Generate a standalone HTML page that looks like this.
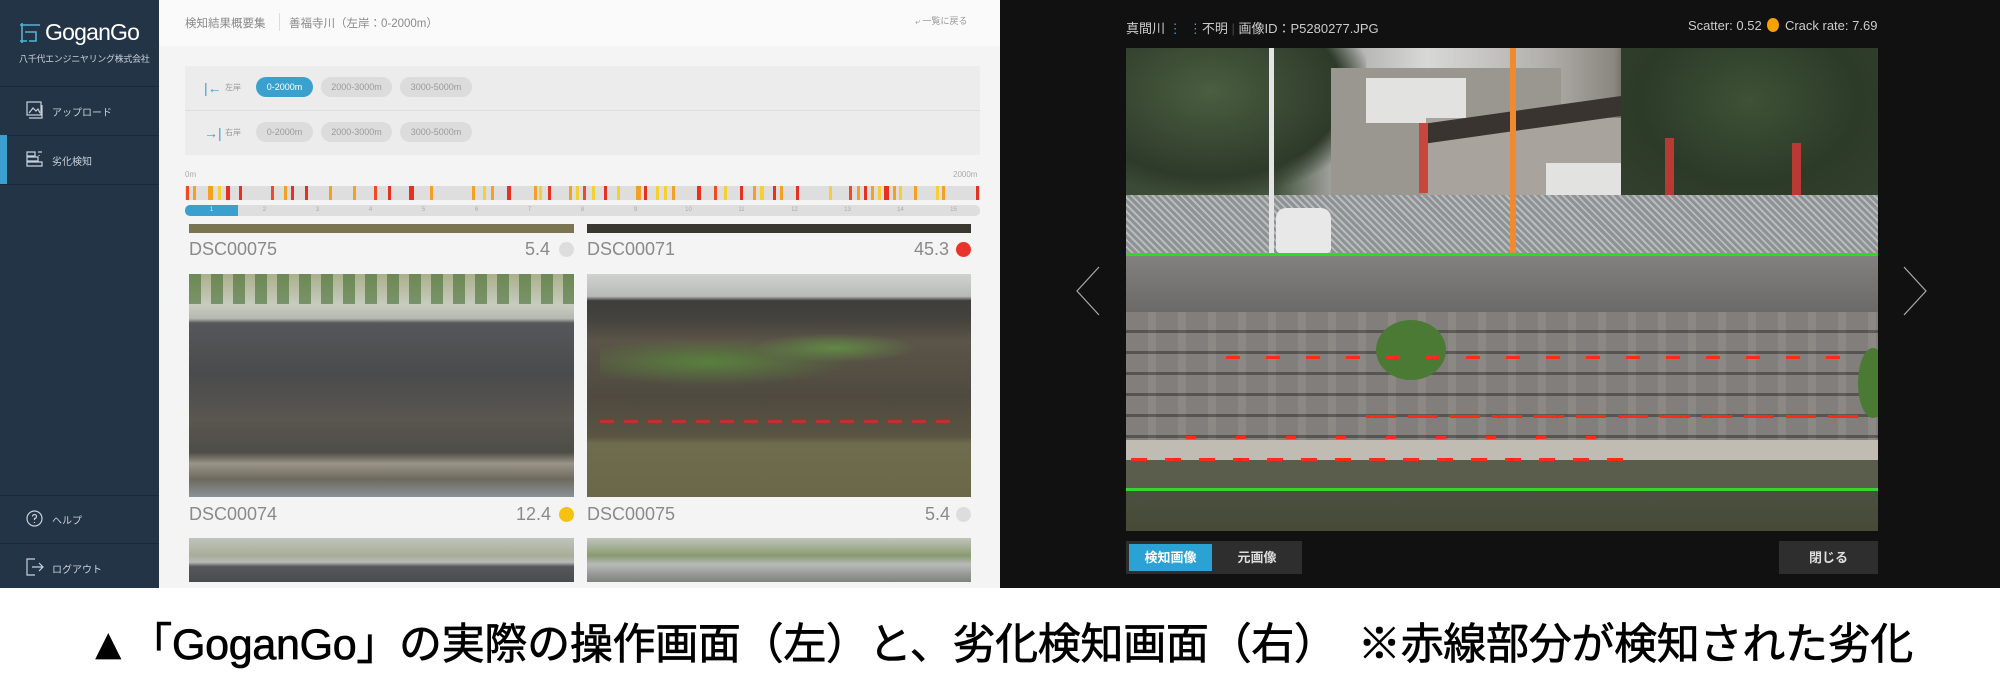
<!DOCTYPE html>
<html><head><meta charset="utf-8">
<style>
*{margin:0;padding:0;box-sizing:border-box}
body{width:2000px;height:700px;overflow:hidden;background:#fff;font-family:"Liberation Sans","Noto Sans CJK JP",sans-serif;position:relative}
.a{position:absolute}
.side{left:0;top:0;width:159px;height:588px;background:#243447}
.sdiv{left:0;width:159px;height:1px;background:#1b2838}
.mi{color:#c9d1db;font-size:10px;left:52px}
.main{left:159px;top:0;width:841px;height:588px;background:#f4f4f4}
.pill{height:20px;border-radius:10px;background:#dcdcdc;color:#9a9a9a;font-size:9px;line-height:20px;text-align:center}
.cap{font-size:18px;color:#8a8a8a}
.dot{width:15px;height:15px;border-radius:50%}
.tk{top:186px;height:14px;width:3px}
.right{left:1000px;top:0;width:1000px;height:588px;background:#111}
.rd{height:3px;background:#ff2a1a}
</style></head><body>

<div class="a side"></div>
<svg class="a" style="left:19px;top:22px" width="22" height="22" viewBox="0 0 22 22" fill="none" stroke="#4fb3d6" stroke-width="1.6"><path d="M1 3H21M3 1V21M1 19H8M6 10H17V19H10"/></svg>
<div class="a" style="left:45px;top:19px;color:#fff;font-size:23px;letter-spacing:-0.8px">GoganGo</div>
<div class="a" style="left:19px;top:52px;color:#c9d1db;font-size:9px;letter-spacing:-0.3px">八千代エンジニヤリング株式会社</div>
<div class="a sdiv" style="top:86px"></div>
<div class="a sdiv" style="top:135px"></div>
<div class="a sdiv" style="top:184px"></div>
<div class="a" style="left:0;top:135px;width:7px;height:49px;background:#3aa1cf"></div>
<svg class="a" style="left:26px;top:101px" width="17" height="18" viewBox="0 0 17 18" fill="none" stroke="#c9d1db" stroke-width="1.2"><rect x="1" y="1" width="14" height="13"/><path d="M3 12L7 7L10 10L12 8L14 12"/><path d="M3 17H16V4"/></svg>
<div class="a mi" style="top:104px">アップロード</div>
<svg class="a" style="left:26px;top:150px" width="17" height="17" viewBox="0 0 17 17" fill="none" stroke="#c9d1db" stroke-width="1.2"><path d="M1 2H9V6H1ZM1 7H12V11H1ZM1 12H16V16H1ZM5 6V7M9 11V12M12 2H16M13 5V6"/></svg>
<div class="a mi" style="top:153px">劣化検知</div>
<div class="a sdiv" style="top:495px"></div>
<div class="a sdiv" style="top:543px"></div>
<svg class="a" style="left:26px;top:510px" width="17" height="17" viewBox="0 0 17 17" fill="none" stroke="#c9d1db" stroke-width="1.2"><circle cx="8.5" cy="8.5" r="7.5"/><path d="M6.5 6.5a2 2 0 1 1 2 2v1.5M8.5 12v1"/></svg>
<div class="a mi" style="top:512px">ヘルプ</div>
<svg class="a" style="left:26px;top:558px" width="18" height="18" viewBox="0 0 18 18" fill="none" stroke="#c9d1db" stroke-width="1.2"><path d="M9 1H1V17H9M6 9H17M13 5L17 9L13 13"/></svg>
<div class="a mi" style="top:561px">ログアウト</div>

<div class="a main"></div>
<div class="a" style="left:159px;top:0;width:841px;height:46px;background:#fafafa"></div>
<div class="a" style="left:185px;top:15px;font-size:11.5px;color:#8a8a8a">検知結果概要集</div>
<div class="a" style="left:279px;top:13px;width:1px;height:18px;background:#ddd"></div>
<div class="a" style="left:289px;top:15px;font-size:11.5px;color:#8a8a8a">善福寺川（左岸：0-2000m）</div>
<div class="a" style="left:915px;top:14px;font-size:9px;color:#999">⤶ 一覧に戻る</div>

<div class="a" style="left:185px;top:66px;width:795px;height:89px;background:#ececec"></div>
<div class="a" style="left:185px;top:110px;width:795px;height:1px;background:#ddd"></div>
<div class="a" style="left:204px;top:80px;color:#3aa1cf;font-size:14px">|←</div>
<div class="a" style="left:225px;top:82px;color:#999;font-size:8px">左岸</div>
<div class="a" style="left:204px;top:125px;color:#3aa1cf;font-size:14px">→|</div>
<div class="a" style="left:225px;top:127px;color:#999;font-size:8px">右岸</div>
<div class="a pill" style="left:256px;top:77px;width:57px;background:#3aa1cf;color:#fff">0-2000m</div>
<div class="a pill" style="left:321px;top:77px;width:71px">2000-3000m</div>
<div class="a pill" style="left:400px;top:77px;width:72px">3000-5000m</div>
<div class="a pill" style="left:256px;top:122px;width:57px">0-2000m</div>
<div class="a pill" style="left:321px;top:122px;width:71px">2000-3000m</div>
<div class="a pill" style="left:400px;top:122px;width:72px">3000-5000m</div>

<div class="a" style="left:185px;top:170px;font-size:8px;color:#aaa">0m</div>
<div class="a" style="left:953px;top:170px;font-size:8px;color:#aaa">2000m</div>
<div class="a" style="left:185px;top:186px;width:795px;height:14px;background:#dedede"></div>
<div class="a tk" style="left:186px;background:#f04a20"></div><div class="a tk" style="left:193px;background:#f4a020"></div><div class="a tk" style="left:208px;background:#f4a020;width:5px"></div><div class="a tk" style="left:218px;background:#f6d030"></div><div class="a tk" style="left:226px;background:#e8301e;width:4px"></div><div class="a tk" style="left:239px;background:#e8301e"></div><div class="a tk" style="left:271px;background:#f04a20"></div><div class="a tk" style="left:284px;background:#f4a020"></div><div class="a tk" style="left:291px;background:#e8301e"></div><div class="a tk" style="left:305px;background:#e8301e"></div><div class="a tk" style="left:329px;background:#f4a020"></div><div class="a tk" style="left:353px;background:#f4a020"></div><div class="a tk" style="left:374px;background:#f04a20"></div><div class="a tk" style="left:388px;background:#e8301e"></div><div class="a tk" style="left:409px;background:#e8301e;width:5px"></div><div class="a tk" style="left:430px;background:#f4a020"></div><div class="a tk" style="left:472px;background:#f4a020"></div><div class="a tk" style="left:483px;background:#f6d030"></div><div class="a tk" style="left:491px;background:#f4a020"></div><div class="a tk" style="left:507px;background:#e8301e;width:4px"></div><div class="a tk" style="left:534px;background:#f4a020"></div><div class="a tk" style="left:539px;background:#f6d030"></div><div class="a tk" style="left:548px;background:#e8301e"></div><div class="a tk" style="left:569px;background:#f4a020"></div><div class="a tk" style="left:576px;background:#f6d030"></div><div class="a tk" style="left:583px;background:#f04a20"></div><div class="a tk" style="left:592px;background:#f6d030"></div><div class="a tk" style="left:604px;background:#e8301e"></div><div class="a tk" style="left:617px;background:#f6d030"></div><div class="a tk" style="left:636px;background:#f4a020;width:5px"></div><div class="a tk" style="left:644px;background:#e8301e"></div><div class="a tk" style="left:656px;background:#f6d030"></div><div class="a tk" style="left:664px;background:#f6d030"></div><div class="a tk" style="left:672px;background:#f4a020"></div><div class="a tk" style="left:697px;background:#e8301e;width:4px"></div><div class="a tk" style="left:714px;background:#f04a20"></div><div class="a tk" style="left:724px;background:#f6d030"></div><div class="a tk" style="left:740px;background:#e8301e"></div><div class="a tk" style="left:753px;background:#f4a020"></div><div class="a tk" style="left:760px;background:#f6d030;width:4px"></div><div class="a tk" style="left:773px;background:#e8301e"></div><div class="a tk" style="left:780px;background:#f4a020"></div><div class="a tk" style="left:796px;background:#e8301e"></div><div class="a tk" style="left:829px;background:#f6d030"></div><div class="a tk" style="left:849px;background:#f04a20"></div><div class="a tk" style="left:857px;background:#f4a020"></div><div class="a tk" style="left:864px;background:#e8301e"></div><div class="a tk" style="left:871px;background:#f4a020"></div><div class="a tk" style="left:878px;background:#f6d030"></div><div class="a tk" style="left:884px;background:#e8301e;width:5px"></div><div class="a tk" style="left:893px;background:#f4a020"></div><div class="a tk" style="left:899px;background:#f6d030"></div><div class="a tk" style="left:914px;background:#f4a020"></div><div class="a tk" style="left:936px;background:#f6d030"></div><div class="a tk" style="left:942px;background:#f4a020"></div><div class="a tk" style="left:976px;background:#e8301e"></div>

<div class="a" style="left:185px;top:205px;width:795px;height:11px;background:#dedede;border-radius:5px"></div>
<div class="a" style="left:185px;top:205px;width:53px;height:11px;background:#3aa1cf;border-radius:5px 0 0 5px"></div>
<div class="a" style="left:185px;top:205px;width:795px;height:11px;display:flex;font-size:6px;color:#aaa;line-height:11px">
<span style="flex:1;text-align:center;color:#cfeaf5">1</span><span style="flex:1;text-align:center">2</span><span style="flex:1;text-align:center">3</span><span style="flex:1;text-align:center">4</span><span style="flex:1;text-align:center">5</span><span style="flex:1;text-align:center">6</span><span style="flex:1;text-align:center">7</span><span style="flex:1;text-align:center">8</span><span style="flex:1;text-align:center">9</span><span style="flex:1;text-align:center">10</span><span style="flex:1;text-align:center">11</span><span style="flex:1;text-align:center">12</span><span style="flex:1;text-align:center">13</span><span style="flex:1;text-align:center">14</span><span style="flex:1;text-align:center">15</span></div>

<div class="a" style="left:189px;top:224px;width:385px;height:9px;background:#7a7452"></div>
<div class="a" style="left:587px;top:224px;width:384px;height:9px;background:#3a3630"></div>
<div class="a cap" style="left:189px;top:239px">DSC00075</div>
<div class="a cap" style="left:525px;top:239px">5.4</div><div class="a dot" style="left:559px;top:242px;background:#ddd"></div>
<div class="a cap" style="left:587px;top:239px">DSC00071</div>
<div class="a cap" style="left:914px;top:239px">45.3</div><div class="a dot" style="left:956px;top:242px;background:#e8342a"></div>

<div class="a" style="left:189px;top:274px;width:385px;height:223px;background:linear-gradient(#a9b08a 0%,#c8ccc0 14%,#b6b8b0 20%,#55575a 22%,#4a4b4c 45%,#5a5650 65%,#4e4d48 80%,#9a9488 85%,#6e6a5e 92%,#8a9298 100%)"></div>
<div class="a" style="left:189px;top:274px;width:385px;height:30px;background:repeating-linear-gradient(90deg,rgba(70,110,50,.6) 0 12px,transparent 12px 22px)"></div>
<div class="a" style="left:587px;top:274px;width:384px;height:223px;background:linear-gradient(#d0d2d0 0%,#b8bab8 10%,#3e3e3c 12%,#44423e 20%,#5b5448 30%,#4f4a40 55%,#5a5442 73%,#6e6c4e 76%,#6a6848 100%)"></div>
<div class="a" style="left:600px;top:320px;width:360px;height:70px;background:radial-gradient(ellipse at 30% 60%,rgba(90,140,60,.8),transparent 40%),radial-gradient(ellipse at 65% 40%,rgba(100,150,70,.8),transparent 25%)"></div>
<div class="a" style="left:600px;top:420px;width:360px;height:3px;background:repeating-linear-gradient(90deg,rgba(220,40,40,.8) 0 14px,transparent 14px 24px)"></div>
<div class="a cap" style="left:189px;top:504px">DSC00074</div>
<div class="a cap" style="left:516px;top:504px">12.4</div><div class="a dot" style="left:559px;top:507px;background:#f5c211"></div>
<div class="a cap" style="left:587px;top:504px">DSC00075</div>
<div class="a cap" style="left:925px;top:504px">5.4</div><div class="a dot" style="left:956px;top:507px;background:#ddd"></div>
<div class="a" style="left:189px;top:538px;width:385px;height:44px;background:linear-gradient(#c0c4bc 0%,#a8ad98 40%,#b8bab8 55%,#55575a 65%,#4a4b4c 100%)"></div>
<div class="a" style="left:587px;top:538px;width:384px;height:44px;background:linear-gradient(#c0c4bc 0%,#8a9a70 40%,#b8bab8 60%,#9a9c9a 80%,#808280 100%)"></div>

<div class="a right"></div>
<div class="a" style="left:1126px;top:18px;font-size:13px;color:#ccc">真間川 <span style="color:#3aa1cf">⋮</span>&nbsp;&nbsp;<span style="color:#3aa1cf">⋮</span>不明 <span style="color:#444">|</span> 画像ID：P5280277.JPG</div>
<div class="a" style="left:1688px;top:18px;font-size:13px;color:#ccc">Scatter: 0.52 <span style="display:inline-block;width:12px;height:14px;border-radius:50%;background:#f5a000;vertical-align:-2px;margin:0 2px"></span> Crack rate: 7.69</div>

<div class="a" style="left:1126px;top:48px;width:752px;height:483px;background:#7c7a76;overflow:hidden">
 <div class="a" style="left:0;top:0;width:752px;height:150px;background:linear-gradient(90deg,#3a4a36 0%,#44543e 20%,#a8a8a6 28%,#d8d8d6 40%,#b4b2ae 55%,#8a8680 65%,#3a4a34 68%,#2e3e2c 100%)"></div>
 <div class="a" style="left:0;top:0;width:240px;height:145px;background:radial-gradient(ellipse at 35% 30%,#4a5e40,#2e3a2a 60%,transparent 75%)"></div>
 <div class="a" style="left:205px;top:20px;width:230px;height:130px;background:#9a9690"></div>
 <div class="a" style="left:240px;top:30px;width:100px;height:45px;background:#e2e2e0"></div>
 <div class="a" style="left:300px;top:70px;width:210px;height:80px;background:#a8a39c"></div>
 <div class="a" style="left:300px;top:60px;width:220px;height:20px;background:#3a3430;transform:skewY(-8deg)"></div>
 <div class="a" style="left:420px;top:115px;width:90px;height:35px;background:#e2e2e0"></div>
 <div class="a" style="left:495px;top:0;width:257px;height:150px;background:radial-gradient(ellipse at 50% 35%,#3e5236,#2c3a28 60%,#34402e)"></div>
 <div class="a" style="left:293px;top:75px;width:9px;height:70px;background:#c8463c"></div>
 <div class="a" style="left:539px;top:90px;width:9px;height:65px;background:#b83a34"></div>
 <div class="a" style="left:666px;top:95px;width:9px;height:60px;background:#b83a34"></div>
 <div class="a" style="left:0;top:147px;width:752px;height:60px;background:repeating-linear-gradient(45deg,#b8bcbe 0 2px,#8e9292 2px 5px)"></div>
 <div class="a" style="left:150px;top:160px;width:55px;height:45px;background:#e8e8e8;border-radius:10px 10px 4px 4px"></div>
 <div class="a" style="left:143px;top:0;width:5px;height:207px;background:#e4e4e4"></div>
 <div class="a" style="left:384px;top:0;width:6px;height:207px;background:#f08a30"></div>
 <div class="a" style="left:0;top:207px;width:752px;height:57px;background:linear-gradient(#838180,#6c6a68)"></div>
 <div class="a" style="left:0;top:264px;width:752px;height:128px;background:repeating-linear-gradient(#8c8985 0 18px,#5e5c58 18px 21px),#85827e"></div>
 <div class="a" style="left:0;top:264px;width:752px;height:128px;background:repeating-linear-gradient(90deg,rgba(0,0,0,.08) 0 22px,transparent 22px 30px)"></div>
 <div class="a" style="left:250px;top:272px;width:70px;height:60px;border-radius:50%;background:#4a7a34"></div>
 <div class="a" style="left:732px;top:300px;width:30px;height:70px;border-radius:50%;background:#4a7a34"></div>
 <div class="a" style="left:0;top:392px;width:752px;height:20px;background:#c0bcb4"></div>
 <div class="a" style="left:0;top:412px;width:752px;height:28px;background:#5a5c4c"></div>
 <div class="a" style="left:0;top:440px;width:752px;height:43px;background:linear-gradient(#4c5040,#464a36)"></div>
 <div class="a rd" style="left:100px;top:308px;width:620px;background:repeating-linear-gradient(90deg,#ff2a1a 0 14px,transparent 14px 40px)"></div>
 <div class="a rd" style="left:240px;top:367px;width:500px;background:repeating-linear-gradient(90deg,#ff2a1a 0 30px,transparent 30px 42px)"></div>
 <div class="a rd" style="left:60px;top:388px;width:420px;background:repeating-linear-gradient(90deg,#ff2a1a 0 10px,transparent 10px 50px)"></div>
 <div class="a rd" style="left:5px;top:410px;width:500px;background:repeating-linear-gradient(90deg,#ff2a1a 0 16px,transparent 16px 34px)"></div>
 <div class="a" style="left:0;top:205px;width:752px;height:3px;background:#33d62a"></div>
 <div class="a" style="left:0;top:440px;width:752px;height:3px;background:#33d62a"></div>
</div>
<svg class="a" style="left:1075px;top:265px" width="26" height="52" viewBox="0 0 26 52" fill="none" stroke="#aaa" stroke-width="1.2"><path d="M24 2L2 26L24 50"/></svg>
<svg class="a" style="left:1902px;top:265px" width="26" height="52" viewBox="0 0 26 52" fill="none" stroke="#aaa" stroke-width="1.2"><path d="M2 2L24 26L2 50"/></svg>
<div class="a" style="left:1126px;top:541px;width:176px;height:33px;background:#2e2e2e"></div>
<div class="a" style="left:1129px;top:544px;width:83px;height:27px;background:#2aa3d4;color:#fff;font-size:13px;font-weight:bold;text-align:center;line-height:27px">検知画像</div>
<div class="a" style="left:1215px;top:544px;width:84px;height:27px;color:#ddd;font-size:13px;font-weight:bold;text-align:center;line-height:27px">元画像</div>
<div class="a" style="left:1779px;top:541px;width:99px;height:33px;background:#2e2e2e;color:#ddd;font-size:13px;font-weight:bold;text-align:center;line-height:33px">閉じる</div>

<div class="a" style="left:87px;top:610px;white-space:nowrap;font-size:43px;color:#000;-webkit-text-stroke:0.7px #000;letter-spacing:-0.3px">▲「GoganGo」の実際の操作画面（左）と、劣化検知画面（右）　※赤線部分が検知された劣化</div>
</body></html>
